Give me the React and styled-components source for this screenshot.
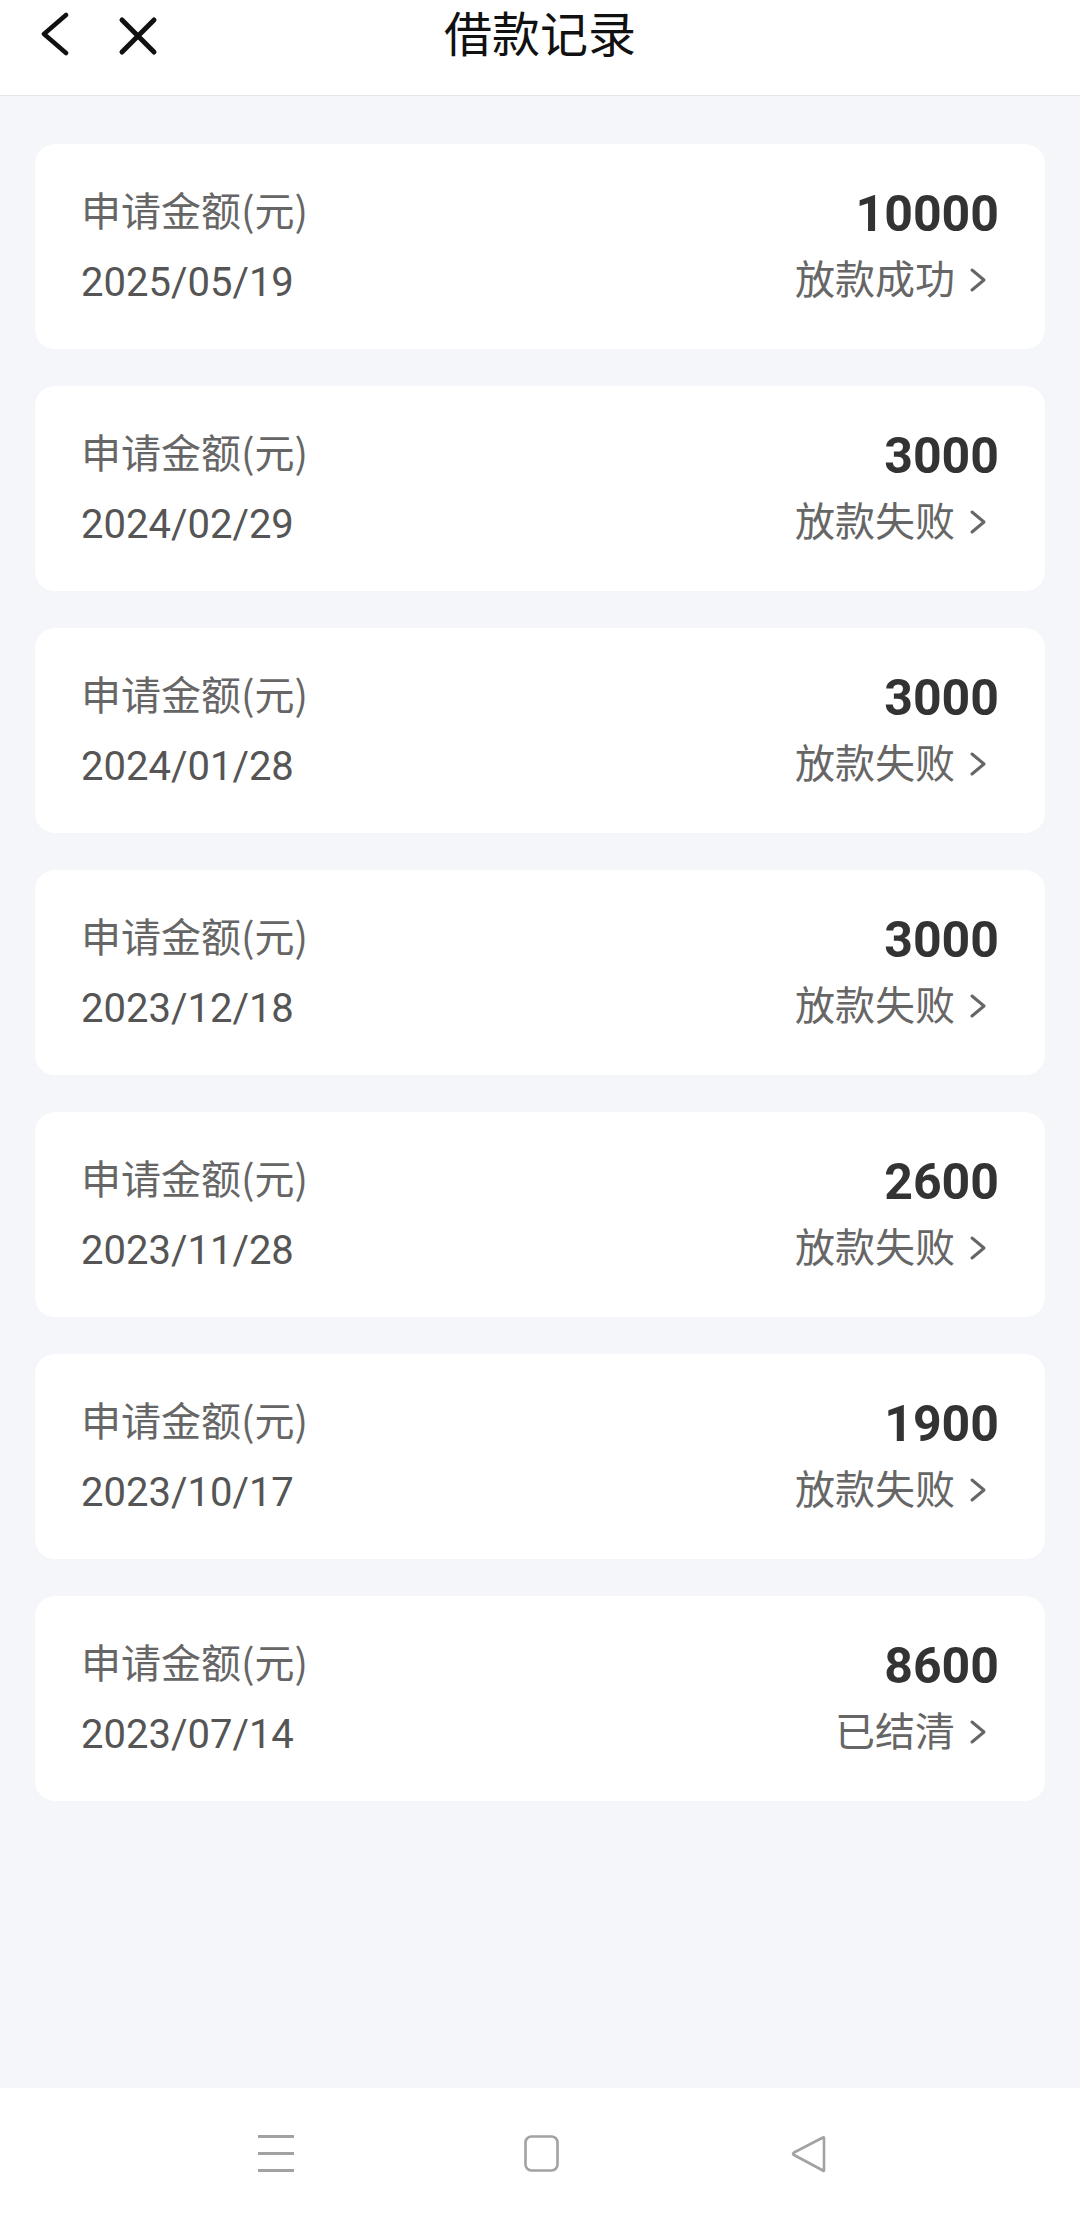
import styled, { createGlobalStyle } from "styled-components";

const GlobalStyle = createGlobalStyle`
  html, body {
    margin: 0;
    padding: 0;
    background: #f5f6fa;
  }
  body {
    font-family: Roboto, "Noto Sans CJK SC", sans-serif;
  }
`;

const Page = styled.div`
  display: flex;
  flex-direction: column;
  height: 2220px;
  background: #f5f6fa;
`;

const Header = styled.header`
  display: grid;
  grid-template-columns: 1fr auto 1fr;
  align-items: start;
  height: 96px;
  padding-top: 1px;
  box-sizing: border-box;
  background: #ffffff;
  border-bottom: 1px solid #e4e5e8;
  flex-shrink: 0;
`;

const HeaderIcons = styled.div`
  display: flex;
  align-items: flex-start;
  gap: 48px;
  padding-left: 40px;
  padding-top: 11px;
`;

const Title = styled.h1`
  margin: 0;
  font-family: "Noto Sans CJK SC", sans-serif;
  font-size: 48px;
  font-weight: 400;
  line-height: 60px;
  color: #111;
`;

const List = styled.main`
  flex: 1;
  display: flex;
  flex-direction: column;
  gap: 37px;
  padding: 48px 35px 0;
`;

const Card = styled.div`
  display: flex;
  justify-content: space-between;
  height: 205px;
  box-sizing: border-box;
  padding: 40px 46px 0 46px;
  background: #ffffff;
  border-radius: 20px;
`;

const Column = styled.div`
  display: flex;
  flex-direction: column;
  align-items: ${(p) => (p.$right ? "flex-end" : "flex-start")};
  padding-top: ${(p) => (p.$right ? "2px" : "0")};
`;

const Label = styled.div`
  font-family: "Noto Sans CJK SC", sans-serif;
  font-size: 40px;
  line-height: 50px;
  color: #666;
`;

const DateText = styled.div`
  margin-top: 24px;
  font-family: Roboto, sans-serif;
  font-size: 40px;
  line-height: 50px;
  color: #555;
`;

const Amount = styled.div`
  font-family: Roboto, sans-serif;
  font-size: 50px;
  font-weight: 700;
  line-height: 56px;
  color: #333;
`;

const Status = styled.div`
  display: flex;
  align-items: center;
  gap: 14px;
  margin-top: 10px;
  margin-right: 12px;
  font-family: "Noto Sans CJK SC", sans-serif;
  font-size: 40px;
  line-height: 50px;
  color: #666;

  svg {
    margin-top: 5px;
  }
`;

const NavBar = styled.nav`
  display: flex;
  justify-content: center;
  align-items: center;
  gap: 230px;
  height: 132px;
  padding-left: 5px;
  background: #ffffff;
  flex-shrink: 0;
`;

const records = [
  { amount: "10000", date: "2025/05/19", status: "放款成功" },
  { amount: "3000", date: "2024/02/29", status: "放款失败" },
  { amount: "3000", date: "2024/01/28", status: "放款失败" },
  { amount: "3000", date: "2023/12/18", status: "放款失败" },
  { amount: "2600", date: "2023/11/28", status: "放款失败" },
  { amount: "1900", date: "2023/10/17", status: "放款失败" },
  { amount: "8600", date: "2023/07/14", status: "已结清" },
];

function BackIcon() {
  return (
    <svg width="30" height="44" viewBox="0 0 30 44">
      <polyline
        points="26,3 4,22 26,41"
        fill="none"
        stroke="#111"
        strokeWidth="4.5"
        strokeLinecap="round"
        strokeLinejoin="round"
      />
    </svg>
  );
}

function CloseIcon() {
  return (
    <svg width="40" height="40" viewBox="0 0 40 40" style={{ marginTop: 4 }}>
      <path
        d="M4 4 L36 36 M36 4 L4 36"
        fill="none"
        stroke="#111"
        strokeWidth="5"
        strokeLinecap="round"
      />
    </svg>
  );
}

function Chevron() {
  return (
    <svg width="18" height="26" viewBox="0 0 18 26">
      <polyline
        points="3,3 15,13 3,23"
        fill="none"
        stroke="#666"
        strokeWidth="3"
        strokeLinecap="round"
        strokeLinejoin="round"
      />
    </svg>
  );
}

function MenuIcon() {
  return (
    <svg width="36" height="38" viewBox="0 0 36 38">
      <rect x="0" y="0" width="36" height="3" fill="#a2a2a2" />
      <rect x="0" y="17" width="36" height="3" fill="#a2a2a2" />
      <rect x="0" y="34" width="36" height="3" fill="#a2a2a2" />
    </svg>
  );
}

function HomeIcon() {
  return (
    <svg width="36" height="38" viewBox="0 0 36 38">
      <rect
        x="1.5"
        y="1.5"
        width="32"
        height="34"
        rx="6"
        fill="none"
        stroke="#a2a2a2"
        strokeWidth="2.6"
      />
    </svg>
  );
}

function BackNavIcon() {
  return (
    <svg width="38" height="38" viewBox="0 0 38 38">
      <path
        d="M34 3 L34 35 Q34 37 32 35 L4 20 Q2 19 4 17.5 L32 3 Q34 1.5 34 3 Z"
        fill="none"
        stroke="#a2a2a2"
        strokeWidth="2.6"
        strokeLinejoin="round"
      />
    </svg>
  );
}

export default function App() {
  return (
    <>
      <GlobalStyle />
      <Page>
        <Header>
          <HeaderIcons>
            <BackIcon />
            <CloseIcon />
          </HeaderIcons>
          <Title>借款记录</Title>
          <div />
        </Header>
        <List>
          {records.map((r, i) => (
            <Card key={i}>
              <Column>
                <Label>申请金额(元)</Label>
                <DateText>{r.date}</DateText>
              </Column>
              <Column $right>
                <Amount>{r.amount}</Amount>
                <Status>
                  {r.status}
                  <Chevron />
                </Status>
              </Column>
            </Card>
          ))}
        </List>
        <NavBar>
          <MenuIcon />
          <HomeIcon />
          <BackNavIcon />
        </NavBar>
      </Page>
    </>
  );
}
